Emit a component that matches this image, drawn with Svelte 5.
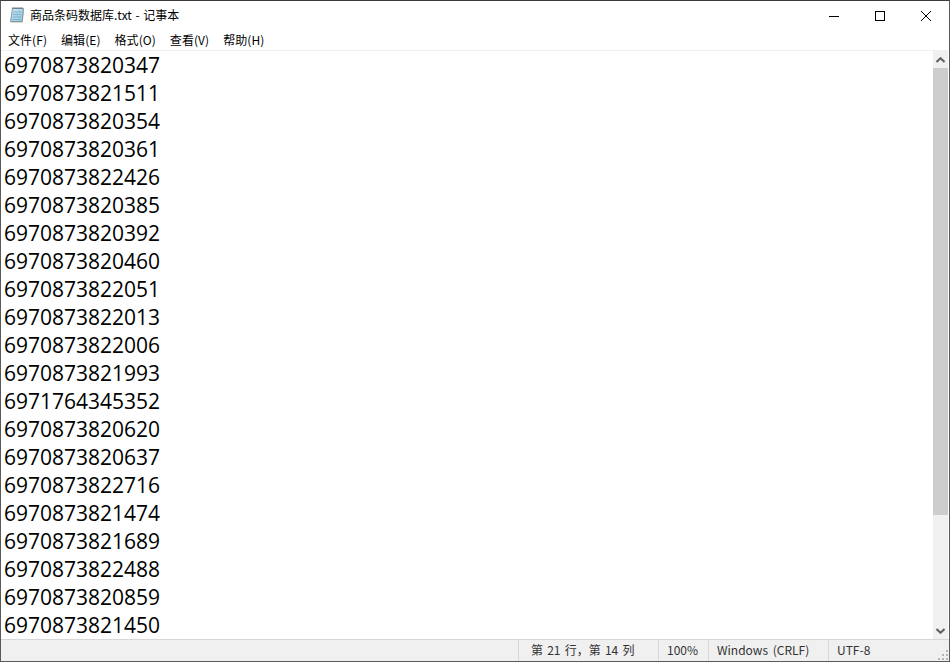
<script>
  const lines = [
    '6970873820347', '6970873821511', '6970873820354', '6970873820361', '6970873822426',
    '6970873820385', '6970873820392', '6970873820460', '6970873822051', '6970873822013',
    '6970873822006', '6970873821993', '6971764345352', '6970873820620', '6970873820637',
    '6970873822716', '6970873821474', '6970873821689', '6970873822488', '6970873820859',
    '6970873821450'
  ];
  const menus = ['文件(F)', '编辑(E)', '格式(O)', '查看(V)', '帮助(H)'];
</script>

<div class="window">
  <header class="titlebar">
    <svg class="app-icon" width="16" height="16" viewBox="0 0 16 16">
      <defs>
        <linearGradient id="paper" x1="0" y1="0" x2="1" y2="1">
          <stop offset="0" stop-color="#cfe8f3" />
          <stop offset="1" stop-color="#8fc3dc" />
        </linearGradient>
      </defs>
      <path d="M13 14.5 L14.5 1.5 L15 3 L13.8 15.5 L2.5 15.5 L1.5 14.5 Z" fill="#c4b184" />
      <path d="M3.5 1.5 L14.5 1.5 L13 14.5 L1.5 14.5 Z" fill="url(#paper)" stroke="#7b9db0" stroke-width="1" />
      <path d="M3.5 1 H14" stroke="#555" stroke-width="1.4" stroke-dasharray="1 1" />
      <path d="M4 5 H12.5 M3.8 7.5 H12.2 M3.5 10 H12 M3.2 12.5 H11.7" stroke="#7fb2cc" stroke-width="1" />
    </svg>
    <span class="title">商品条码数据库.txt - 记事本</span>
    <div class="controls">
      <button class="ctl" aria-label="最小化">
        <svg width="12" height="12" viewBox="0 0 12 12"><path d="M1 6.5 H11" stroke="#000" /></svg>
      </button>
      <button class="ctl" aria-label="最大化">
        <svg width="12" height="12" viewBox="0 0 12 12"><rect x="1.5" y="1.5" width="9" height="9" fill="none" stroke="#000" /></svg>
      </button>
      <button class="ctl" aria-label="关闭">
        <svg width="12" height="12" viewBox="0 0 12 12"><path d="M1 1 L11 11 M11 1 L1 11" stroke="#000" fill="none" /></svg>
      </button>
    </div>
  </header>

  <nav class="menubar">
    {#each menus as m}
      <span class="menu">{m}</span>
    {/each}
  </nav>

  <main class="body">
    <div class="text">
      {#each lines as line}
        <div class="line">{line}</div>
      {/each}
    </div>
    <div class="scrollbar">
      <div class="arrow">
        <svg width="9" height="6" viewBox="0 0 9 6"><path d="M0.5 5 L4.5 1.2 L8.5 5" fill="none" stroke="#606060" stroke-width="2" /></svg>
      </div>
      <div class="track"><div class="thumb"></div></div>
      <div class="arrow">
        <svg width="9" height="6" viewBox="0 0 9 6"><path d="M0.5 1 L4.5 4.8 L8.5 1" fill="none" stroke="#606060" stroke-width="2" /></svg>
      </div>
    </div>
  </main>

  <footer class="statusbar">
    <div class="cell pos">第 21 行，第 14 列</div>
    <div class="cell zoom">100%</div>
    <div class="cell eol">Windows (CRLF)</div>
    <div class="cell enc">UTF-8</div>
    <svg class="grip" width="12" height="12" viewBox="0 0 12 12">
      <g fill="#b4b4b4">
        <rect x="9" y="1" width="2" height="2" />
        <rect x="5" y="5" width="2" height="2" />
        <rect x="9" y="5" width="2" height="2" />
        <rect x="1" y="9" width="2" height="2" />
        <rect x="5" y="9" width="2" height="2" />
        <rect x="9" y="9" width="2" height="2" />
      </g>
    </svg>
  </footer>
</div>

<style>
  :global(body) {
    margin: 0;
    background: #fff;
  }

  .window {
    width: 950px;
    height: 662px;
    box-sizing: border-box;
    border: 1px solid #5a5a5a;
    border-top-color: #3c3c3c;
    background: #fff;
    display: flex;
    flex-direction: column;
    overflow: hidden;
    font-family: "Noto Sans CJK SC", "Open Sans", sans-serif;
    color: #000;
  }

  .titlebar {
    height: 29px;
    flex: none;
    display: flex;
    align-items: center;
    padding-left: 8px;
    font-size: 12px;
  }

  .app-icon {
    margin: -2px 5px 0 0;
  }

  .title {
    flex: 1;
    margin-top: -2px;
    word-spacing: 1px;
  }

  .controls {
    display: flex;
    height: 100%;
  }

  .ctl {
    width: 46px;
    height: 29px;
    padding: 0;
    border: 0;
    background: none;
    display: flex;
    align-items: center;
    justify-content: center;
  }

  .menubar {
    height: 20px;
    flex: none;
    box-sizing: border-box;
    padding-bottom: 2px;
    display: flex;
    align-items: center;
    font-size: 12px;
  }

  .menu {
    padding: 0 7px;
    letter-spacing: 0.06px;
  }

  .body {
    flex: 1;
    min-height: 0;
    display: flex;
    border-top: 1px solid #f0f0f0;
  }

  .text {
    flex: 1;
    padding-left: 3px;
    overflow: hidden;
    font-family: "Open Sans", sans-serif;
    font-size: 21px;
    font-weight: 500;
    line-height: 28px;
    white-space: pre;
  }

  .scrollbar {
    width: 15px;
    flex: none;
    margin-right: 1px;
    display: flex;
    flex-direction: column;
    background: #f0f0f0;
  }

  .arrow {
    height: 17px;
    flex: none;
    display: flex;
    align-items: center;
    justify-content: center;
  }

  .track {
    flex: 1;
    min-height: 0;
  }

  .thumb {
    height: 447px;
    background: #cdcdcd;
  }

  .statusbar {
    height: 22px;
    flex: none;
    box-sizing: border-box;
    border-top: 1px solid #d7d7d7;
    background: #f0f0f0;
    display: flex;
    align-items: center;
    justify-content: flex-end;
    position: relative;
    font-size: 12px;
    color: #333;
  }

  .cell {
    height: 100%;
    box-sizing: border-box;
    padding-bottom: 2px;
    display: flex;
    align-items: center;
    border-left: 1px solid #d7d7d7;
    white-space: pre;
  }

  .pos {
    width: 140px;
    padding-left: 12px;
    word-spacing: 1.5px;
  }

  .zoom {
    width: 50px;
    padding-left: 8px;
  }

  .eol {
    width: 120px;
    padding-left: 8px;
    word-spacing: 2px;
  }

  .enc {
    width: 121px;
    padding-left: 8px;
  }

  .grip {
    position: absolute;
    right: 0;
    bottom: 0;
  }
</style>
